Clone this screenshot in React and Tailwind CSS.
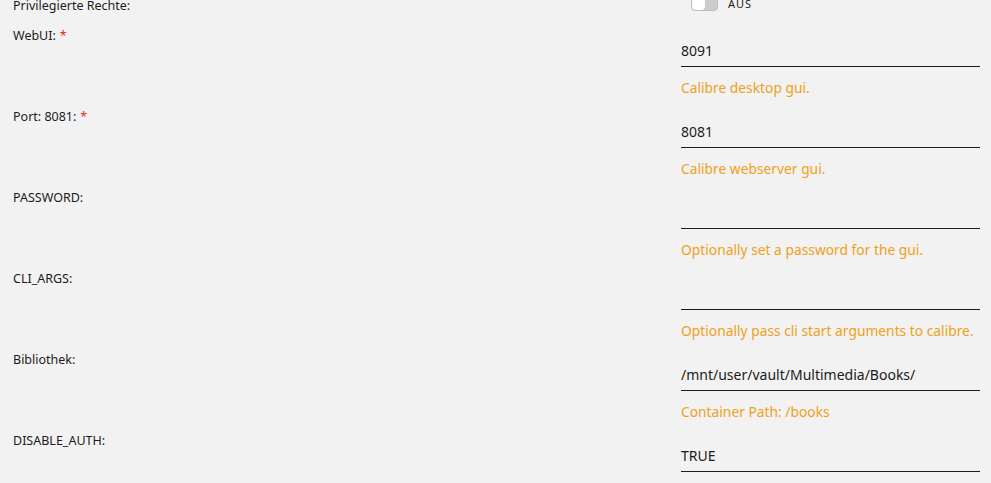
import React from 'react'

const rows = [
  { label: 'WebUI:', required: true, value: '8091', hint: 'Calibre desktop gui.' },
  { label: 'Port: 8081:', required: true, value: '8081', hint: 'Calibre webserver gui.' },
  { label: 'PASSWORD:', value: '', hint: 'Optionally set a password for the gui.' },
  { label: 'CLI_ARGS:', value: '', hint: 'Optionally pass cli start arguments to calibre.' },
  { label: 'Bibliothek:', value: '/mnt/user/vault/Multimedia/Books/', hint: 'Container Path: /books' },
  { label: 'DISABLE_AUTH:', value: 'TRUE' },
]

function Field({ label, required, value, hint }) {
  return (
    <div className="flex h-[81px] shrink-0">
      <div className="flex-1 pl-[13px] leading-4">
        {label}
        {required && <span className="text-[#e22828] ml-1">*</span>}
      </div>
      <div className="w-[299px] mr-[11px] pt-2 text-[14px]">
        <div className="h-[31px] border-b border-[#1c1b1b] flex items-center leading-4">{value}</div>
        {hint && <div className="mt-[13px] leading-4 text-[13.8px] text-[#f0a020]">{hint}</div>}
      </div>
    </div>
  )
}

export default function App() {
  return (
    <div className="h-screen bg-[#f2f2f2] text-[#1c1b1b] text-[12.5px] font-['Noto_Sans',sans-serif] overflow-hidden flex flex-col">
      <div className="flex h-[31px] shrink-0 -mt-[3px] pt-[1px]">
        <div className="flex-1 pl-[13px] leading-4">Privilegierte Rechte:</div>
        <div className="w-[299px] mr-[11px] pl-[10px] -mt-[1px] flex items-start gap-[10px]">
          <div className="w-[27px] h-[14px] rounded-[4px] bg-[#cccccc] border border-[#bdbdbd] flex items-center">
            <div className="w-[13px] h-[12px] rounded-[4px] bg-white" />
          </div>
          <span className="text-[11px] tracking-[1px] leading-[14px]">AUS</span>
        </div>
      </div>
      {rows.map((r) => (
        <Field key={r.label} {...r} />
      ))}
    </div>
  )
}
